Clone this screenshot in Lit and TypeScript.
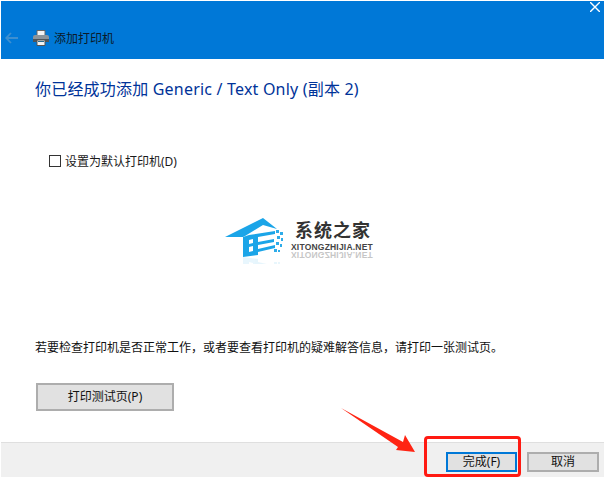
import { LitElement, css, html, svg } from 'lit';
import { customElement } from 'lit/decorators.js';

const logoHouse = svg`
	<path d="M0 19 L38 0 L52 11 L38 7 L20 18 L18 19 Z" fill="#1ba5e8"/>
	<path d="M18 19 L24 17 L50 13 L50 16 L33 19 L33 24 L49 21 L49 24 L33 27 L33 31 L50 27 L50 30 L33 34 L33 37 L18 39 Z M24 22 L24 26 L28 25 L28 21 Z M24 29 L24 34 L28 33 L28 28 Z" fill="#1ba5e8" fill-rule="evenodd"/>
	<g fill="#2eace9">
		<rect x="51" y="12" width="3" height="3"/><rect x="55" y="14" width="3" height="3"/>
		<rect x="52" y="18" width="3" height="3"/><rect x="56" y="20" width="3" height="3"/>
		<rect x="51" y="24" width="3" height="3"/><rect x="55" y="26" width="2" height="3"/>
		<rect x="49" y="31" width="3" height="3"/><rect x="53" y="32" width="2" height="2"/>
	</g>
`;

@customElement('app-root')
export class AppRoot extends LitElement {

	static styles = css`
		:host {
			display: block;
			position: relative;
			width: 604px;
			height: 484px;
			box-sizing: border-box;
			padding: 1px 0 7px 1px;
			background: #fff;
			font-family: 'Noto Sans', 'Noto Sans CJK SC', sans-serif;
			font-size: 12px;
			color: #1a1a1a;
			overflow: hidden;
		}
		.window {
			display: flex;
			flex-direction: column;
			height: 100%;
		}
		.titlebar {
			height: 58px;
			background: #0078d7;
			position: relative;
			display: flex;
			align-items: center;
			padding: 16px 0 0 4px;
			box-sizing: border-box;
			gap: 14px;
		}
		.titlebar .title { color: #0b1a2a; line-height: 16px; margin: 1px 0 0 -9px; }
		.close { position: absolute; top: 1px; right: 4px; }
		.content {
			flex: 1;
			display: flex;
			flex-direction: column;
			padding: 0 0 0 34px;
		}
		h1 {
			margin: 19px 0 0;
			font-size: 16px;
			font-weight: 400;
			line-height: 22px;
			letter-spacing: .2px;
			color: #003399;
		}
		.check {
			display: flex;
			align-items: center;
			gap: 4px;
			margin: 53px 0 0 14px;
			height: 16px;
		}
		.box {
			width: 10px;
			height: 10px;
			border: 1.5px solid #333;
		}
		.logo {
			align-self: flex-start;
			margin: 49px 0 0 190px;
			display: flex;
			gap: 8px;
			height: 88px;
		}
		.logo-mark { display: block; }
		.logo-text { display: flex; flex-direction: column; }
		.logo-name {
			font-size: 18px;
			font-weight: 700;
			line-height: 24px;
			letter-spacing: 1px;
			margin-left: 4px;
			color: #333;
		}
		.logo-url {
			font-family: 'Liberation Sans', sans-serif;
			font-size: 8.5px;
			font-weight: 700;
			line-height: 7px;
			letter-spacing: .2px;
			color: #444;
			margin-top: 2px;
		}
		.logo-url.mirror {
			transform: scaleY(-1);
			opacity: .3;
			margin-top: 0;
		}
		.hint {
			margin: 33px 0 0;
			line-height: 18px;
			color: #111;
		}
		.btn {
			box-sizing: border-box;
			background: #e1e1e1;
			border: 2px solid #adadad;
			display: flex;
			align-items: center;
			justify-content: center;
			color: #111;
			line-height: 16px;
		}
		.print { width: 138px; height: 28px; margin: 26px 0 0 1px; }
		.footer {
			height: 35px;
			box-sizing: border-box;
			background: #f0f0f0;
			border-top: 1px solid #dfdfdf;
			display: flex;
			justify-content: flex-end;
			gap: 10px;
			padding: 9px 5px 0 0;
		}
		.footer .btn { width: 72px; height: 20px; }
		.footer .primary { width: 71px; border-color: #0078d7; }
		.mark-box {
			position: absolute;
			left: 424px;
			top: 436px;
			width: 97px;
			height: 41px;
			box-sizing: border-box;
			border: 3px solid #ff1a12;
			border-radius: 4px;
		}
		.arrow { position: absolute; left: 336px; top: 402px; }
	`;

	render() {
		return html`
			<div class="window">
				<div class="titlebar">
					<svg width="14" height="12" viewBox="0 0 14 12">
						<path d="M6 1 L1.2 6 L6 11 M1.5 6 L13 6" fill="none" stroke="#3d8fd0" stroke-width="1.8"/>
					</svg>
					<svg width="16" height="16" viewBox="0 0 16 16">
						<path d="M4 .5 H12 V6 H4 Z" fill="#f4f4f4" stroke="#666"/>
						<path d="M0 7 Q0 5 2 5 H14 Q16 5 16 7 V12 H0 Z" fill="#8b949b"/>
						<rect x="0" y="9" width="16" height="3" fill="#4d555b"/>
						<path d="M4 10 H12 V15.5 H4 Z" fill="#f4f4f4" stroke="#555"/>
						<rect x="5" y="11" width="6" height="1" fill="#2b6d8f"/>
					</svg>
					<span class="title">添加打印机</span>
					<svg class="close" width="10" height="10" viewBox="0 0 10 10">
						<path d="M0 0 L10 10 M10 0 L0 10" stroke="#fff" stroke-width="1.4"/>
					</svg>
				</div>
				<div class="content">
					<h1>你已经成功添加 Generic / Text Only (副本 2)</h1>
					<div class="check">
						<span class="box"></span>
						<span>设置为默认打印机(D)</span>
					</div>
					<div class="logo">
						<svg class="logo-mark" width="58" height="46" viewBox="0 0 58 46">
							${logoHouse}
							<g transform="translate(0 78) scale(1 -1)" opacity=".1">${logoHouse}</g>
						</svg>
						<div class="logo-text">
							<span class="logo-name">系统之家</span>
							<span class="logo-url">XITONGZHIJIA.NET</span>
							<span class="logo-url mirror">XITONGZHIJIA.NET</span>
						</div>
					</div>
					<p class="hint">若要检查打印机是否正常工作，或者要查看打印机的疑难解答信息，请打印一张测试页。</p>
					<div class="btn print">打印测试页(P)</div>
				</div>
				<div class="footer">
					<div class="btn primary">完成(F)</div>
					<div class="btn">取消</div>
				</div>
			</div>
			<div class="mark-box"></div>
			<svg class="arrow" width="90" height="60" viewBox="0 0 90 60">
				<path d="M5 6 L67 40 L69 33 L79 50 L60 48 L62 45 Z" fill="#ff2413"/>
			</svg>
		`;
	}
}

declare global {
	interface HTMLElementTagNameMap {
		'app-root': AppRoot
	}
}
